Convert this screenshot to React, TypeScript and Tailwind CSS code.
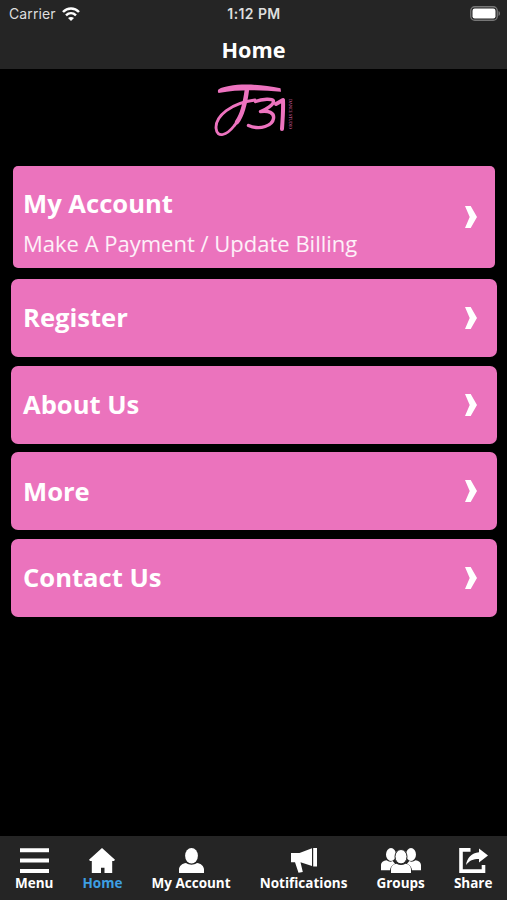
import React from 'react';

type TabId = 'menu' | 'home' | 'account' | 'notifications' | 'groups' | 'share';

const MenuIcon = () => (
  <svg width="29" height="25" viewBox="0 0 29 25" fill="currentColor">
    <path d="M0 .3h29v3.900H0zM0 10.600h29v3.900H0zM0 21h29v3.900H0z" />
  </svg>
);

const HomeIcon = () => (
  <svg width="26" height="25" viewBox="0 0 26 25" fill="currentColor">
    <path d="M13 0 26 11.800l-1 1.200h-1.800v12h-7.700v-5.200h-3.500V25H2.800V13H1L0 11.800Z" />
  </svg>
);

const AccountIcon = () => (
  <svg width="25" height="25" viewBox="0 0 25 25" fill="currentColor">
    <ellipse cx="12.500" cy="7.700" rx="6.400" ry="7.700" />
    <path d="M0 25v-3.500C0 18 3.200 15.300 7 14.900c3.400 2.300 7.600 2.300 11 0 3.800.4 7 3.100 7 6.600V25Z" />
  </svg>
);

const NotificationsIcon = () => (
  <svg width="26" height="25" viewBox="0 0 26 25" fill="currentColor">
    <path d="M0 5h8.500L21 .3v17.700L9.500 14.300l2.300 9.700-4.300.8L4 14.300H0ZM22.200 0H26v18.500h-3.800Z" />
  </svg>
);

const GroupsIcon = () => (
  <svg width="40" height="25" viewBox="0 0 40 25" fill="currentColor">
    <ellipse cx="10" cy="6.500" rx="5" ry="6.500" />
    <ellipse cx="30" cy="6.500" rx="5" ry="6.500" />
    <path d="M0 22.300v-5c0-2.900 2.500-4.700 5.500-5 2 1.500 4 1.700 6.200.8l2.300 2.700c-2.800 1-4.700 3.200-5 6.500ZM40 22.300v-5c0-2.900-2.500-4.700-5.500-5-2 1.500-4 1.700-6.200.8L26 15.800c2.800 1 4.700 3.200 5 6.500Z" />
    <ellipse cx="20" cy="8.700" rx="6" ry="7.200" className="stroke-[#252525]" />
    <path d="M10 25v-3.500c0-3.200 2.300-5.500 5.500-5.700 3 1.700 6 1.700 9 0 3.200.2 5.500 2.500 5.500 5.700V25Z" />
  </svg>
);

const ShareIcon = () => (
  <svg width="29" height="25" viewBox="0 0 29 25" fill="currentColor">
    <path d="M11.500 1.900H2v21.200h22.500v-6" fill="none" stroke="currentColor" strokeWidth="3.600" />
    <path d="M20 .5 29 7.500l-9 7V11C14 11 10.500 12.500 7 17 8 10 12.500 4.700 20 4.200Z" />
  </svg>
);

const Chevron = () => (
  <svg width="12" height="22" viewBox="0 0 12 22" fill="#fff" className="shrink-0">
    <path d="M0 0h5.700L12 11 5.700 22H0l4.700-11Z" />
  </svg>
);

const Logo = () => (
  <svg width="80" height="54" viewBox="0 0 80 54" fill="#ed73bf" className="overflow-visible">
    <path d="M4.500 9C2 5 7 3.500 15 2 31-.8 49 1 66.500 4.200L67 7.700C49 6.500 28 4.500 4.500 9Z" />
    <g fill="none" stroke="#ed73bf" strokeLinecap="round" strokeLinejoin="round">
      <path d="M33 5c-2 13-4 27-13 37C13 51 3 55 2 44c-.5-12 15-25 39-28" strokeWidth="2.800" />
      <path d="M33 5c-1.500 12-4 25-10 33" strokeWidth="4.500" />
      <path d="M41.500 17.500c6-2.500 18-3.500 18 0 0 3-7 8-13 10 8-1 14 1 13 7-1 7-13 12-25 7" strokeWidth="3.400" />
      <path d="m62 20 7-4c.5 10-.5 20-1 29" strokeWidth="4" />
    </g>
    <text transform="translate(75 15) rotate(90)" textLength="30" lengthAdjust="spacingAndGlyphs" className="font-['Liberation_Serif',serif] text-[5px]">
      DANCE STUDIO
    </text>
  </svg>
);

const links = ['Register', 'About Us', 'More', 'Contact Us'];

const tabs: { id: TabId; label: string; icon: React.FC }[] = [
  { id: 'menu', label: 'Menu', icon: MenuIcon },
  { id: 'home', label: 'Home', icon: HomeIcon },
  { id: 'account', label: 'My Account', icon: AccountIcon },
  { id: 'notifications', label: 'Notifications', icon: NotificationsIcon },
  { id: 'groups', label: 'Groups', icon: GroupsIcon },
  { id: 'share', label: 'Share', icon: ShareIcon },
];

function App() {
  const activeTab: TabId = 'home';

  return (
    <div className="flex h-[900px] w-[507px] flex-col overflow-hidden bg-black font-['Open_Sans',sans-serif] text-white">
      {/* Header */}
      <header className="h-[69px] bg-[#252525]">
        <div className="grid h-[27px] grid-cols-3 items-center pl-[9px] pr-[6px] font-['Inter',sans-serif] text-[14px] text-[#dedede]">
          <div className="flex items-center gap-[6px]">
            <span className="tracking-[0.1px]">Carrier</span>
            <svg width="18" height="14" viewBox="0 0 18 14" fill="none" stroke="#fff" strokeWidth="2.500">
              <path d="M1 5c4.500-4.700 11.500-4.700 16 0M4 8.300c3-2.800 7-2.800 10 0" />
              <path d="m9 14-3-3c1.700-1.500 4.300-1.500 6 0Z" fill="#fff" stroke="none" />
            </svg>
          </div>
          <span className="-ml-[2px] text-center font-semibold tracking-[0.4px]">1:12 PM</span>
          <svg width="31" height="15" viewBox="0 0 31 15" className="justify-self-end">
            <rect x=".75" y=".75" width="26.500" height="13.500" rx="4" fill="none" stroke="#777" strokeWidth="1.300" />
            <rect x="2.500" y="2.500" width="23" height="10" rx="2.200" fill="#fff" />
            <path d="M28.500 5c2 .8 2 4.200 0 5Z" fill="#777" />
          </svg>
        </div>
        <h1 className="text-center text-[21.700px] font-bold leading-[46px]">Home</h1>
      </header>

      {/* Content */}
      <main className="flex-1">
        <div className="flex h-[97px] justify-center pt-[15px]">
          <Logo />
        </div>
        <button className="ml-[13px] flex h-[102px] w-[482px] items-center justify-between rounded-[5px] bg-[#eb73bd] pl-[10px] pr-[18px] text-left">
          <div className="pt-[10px]">
            <div className="text-[25.600px] font-bold leading-[41px]">My Account</div>
            <div className="text-[22px] leading-[38px] text-white/90">Make A Payment / Update Billing</div>
          </div>
          <Chevron />
        </button>
        <div className="mt-[11px] flex flex-col gap-[8.700px] px-[11px]">
          {links.map((label) => (
            <button
              key={label}
              className="flex h-[78px] w-[486px] items-center justify-between rounded-[7px] bg-[#eb73bd] pl-[12px] pr-[20px] text-left text-[25.600px] font-bold"
            >
              <span className="pt-px">{label}</span>
              <Chevron />
            </button>
          ))}
        </div>
      </main>

      {/* Navigation Tabs */}
      <nav className="flex h-[64px] justify-between bg-[#252525] pl-[15px] pr-[14.500px] pt-[12px]">
        {tabs.map(({ id, label, icon: Icon }) => (
          <button key={id} className="flex flex-col items-center">
            <Icon />
            <span
              className={`whitespace-nowrap text-[13.500px] font-bold leading-[20px] ${
                activeTab === id ? 'text-[#3d9fe3]' : 'text-white'
              }`}
            >
              {label}
            </span>
          </button>
        ))}
      </nav>
    </div>
  );
}

export default App;
